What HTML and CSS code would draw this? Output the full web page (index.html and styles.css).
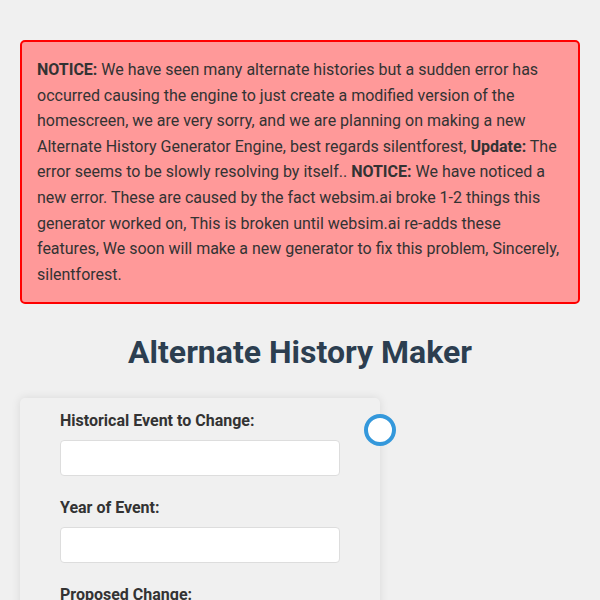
FILE: index.html
```html
<!DOCTYPE html>
<html lang="en">
<head>
<meta charset="utf-8">
<title>Alternate History Maker</title>
<link rel="stylesheet" href="styles.css">
</head>
<body>
<div class="page">
  <div class="notice">
    <strong>NOTICE:</strong> We have seen many alternate histories but a sudden error has occurred causing the engine to just create a modified version of the homescreen, we are very sorry, and we are planning on making a new Alternate History Generator Engine, best regards silentforest, <strong>Update:</strong> The error seems to be slowly resolving by itself.. <strong>NOTICE:</strong> We have noticed a new error. These are caused by the fact websim.ai broke 1-2 things this generator worked on, This is broken until websim.ai re-adds these features, We soon will make a new generator to fix this problem, Sincerely, silentforest.
  </div>
  <h1 class="title">Alternate History Maker</h1>
  <div class="workspace">
    <form class="card">
      <div class="group">
        <label class="label" for="event">Historical Event to Change:</label>
        <input class="input" id="event" type="text">
      </div>
      <div class="group">
        <label class="label" for="year">Year of Event:</label>
        <input class="input" id="year" type="text">
      </div>
      <div class="group">
        <label class="label" for="change">Proposed Change:</label>
        <input class="input" id="change" type="text">
      </div>
    </form>
    <div class="spinner"></div>
  </div>
</div>
</body>
</html>
```
FILE: styles.css
```css
* { box-sizing: border-box; }
html, body {
  margin: 0;
  padding: 0;
  background: #f0f0f0;
}
body {
  font-family: Roboto, "Liberation Sans", Arial, sans-serif;
  color: #333;
  font-size: 16px;
  line-height: 1.6;
}
.page {
  padding: 40px 20px 20px;
}
.notice {
  background: #ff9999;
  border: 2px solid #ff0000;
  border-radius: 5px;
  padding: 15px;
  color: #333;
}
.notice strong { font-weight: 700; }
.title {
  margin: 29px 0 27px;
  text-align: center;
  font-size: 32px;
  line-height: 38px;
  font-weight: 700;
  color: #2c3e50;
}
.workspace {
  position: relative;
  width: 360px;
}
.card {
  background: #f0f0f0;
  border-radius: 5px;
  box-shadow: 0 0 10px rgba(0,0,0,0.1);
  padding: 10px 40px 20px;
  margin: 0;
}
.group {
  display: flex;
  flex-direction: column;
  margin-bottom: 19px;
}
.label {
  font-weight: 700;
  font-size: 16px;
  line-height: 25.6px;
  margin-bottom: 6px;
  color: #333;
}
.input {
  width: 280px;
  height: 36px;
  background: #fff;
  border: 1px solid #ddd;
  border-radius: 4px;
  font: inherit;
  padding: 0 8px;
}
.spinner {
  position: absolute;
  left: 344px;
  top: 16px;
  width: 32px;
  height: 32px;
  border-radius: 50%;
  border: 4px solid #3498db;
  background: #fff;
}
```
